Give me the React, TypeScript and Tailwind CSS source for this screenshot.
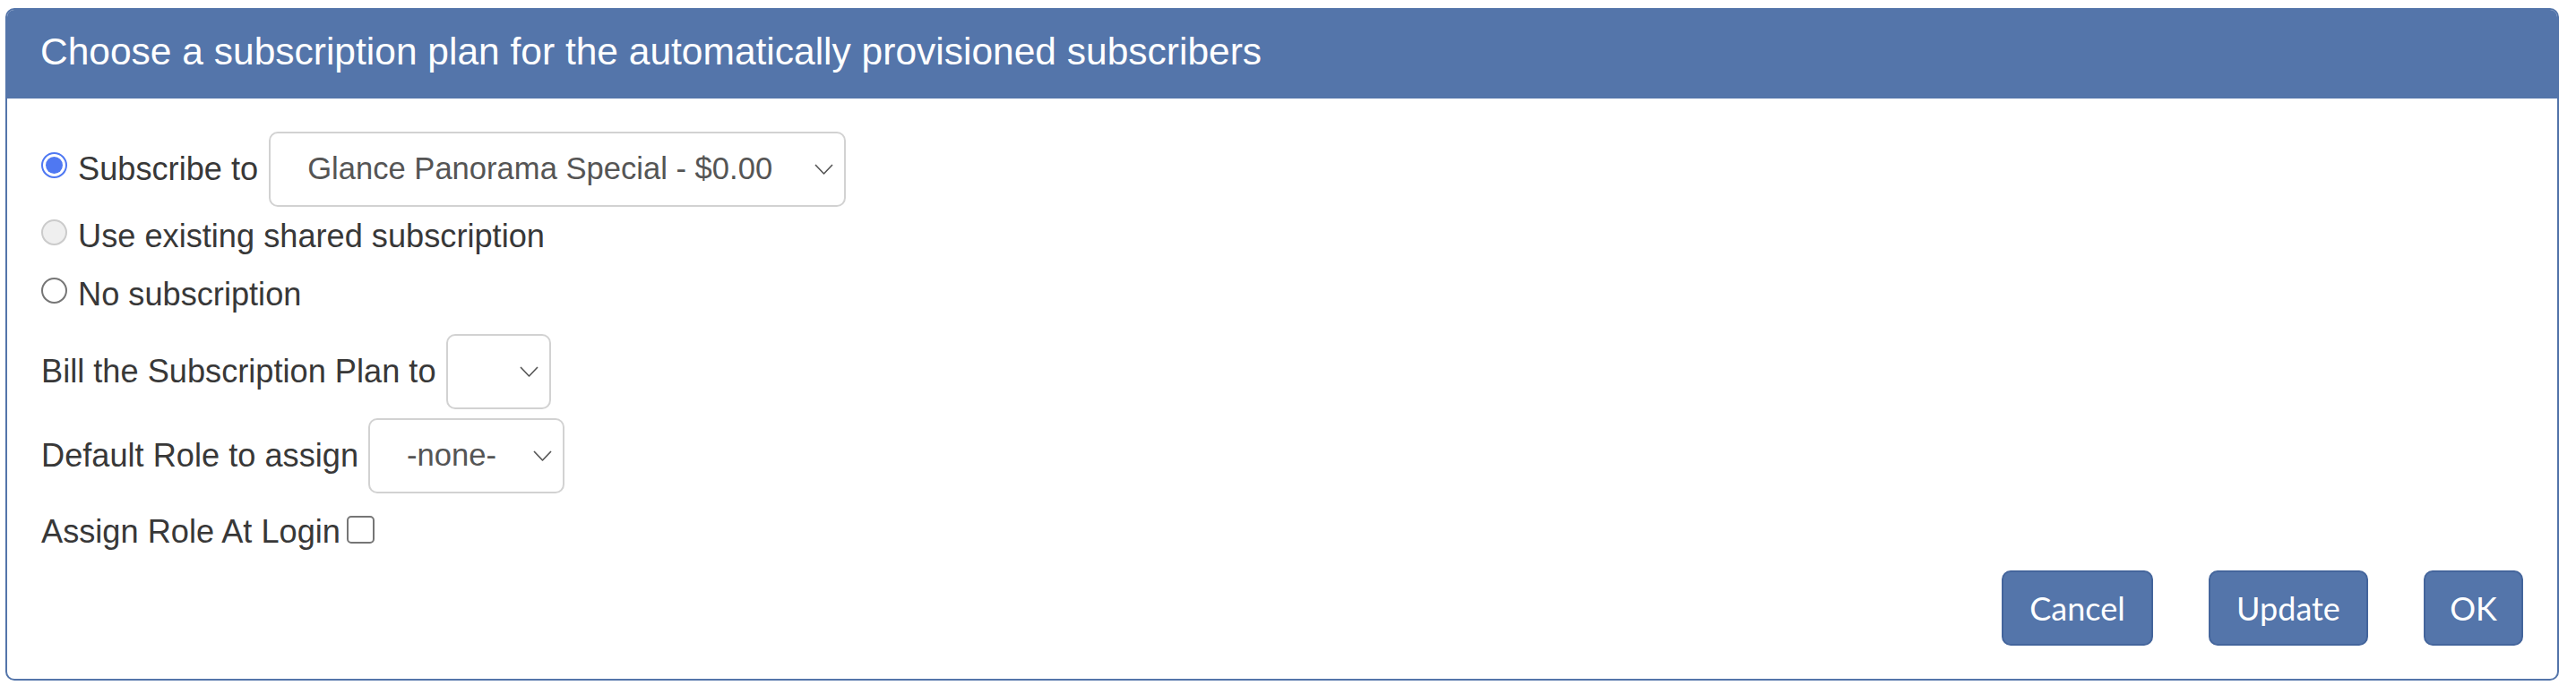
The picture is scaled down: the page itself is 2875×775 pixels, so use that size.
import clsx from 'clsx'

const BLUE = 'bg-[#5475aa]'

function Chevron() {
  return (
    <svg width="21" height="12" viewBox="0 0 21 12" fill="none" aria-hidden>
      <polyline points="1,1 10.5,11 20,1" stroke="#555" strokeWidth="1.6" strokeLinejoin="round" />
    </svg>
  )
}

function FakeSelect({ value, width }: { value?: string; width: string }) {
  return (
    <div
      className={clsx(
        'flex h-[84px] shrink-0 items-center justify-between rounded-[10px] border-2 border-[#d2d2d2] bg-white pl-[41px] pr-[12px] text-[34.6px] text-[#555]',
        width
      )}
    >
      <span className="whitespace-nowrap">{value ?? ''}</span>
      <Chevron />
    </div>
  )
}

function Radio({ state }: { state: 'checked' | 'disabled' | 'off' }) {
  if (state === 'checked') {
    return (
      <span className="mb-[10px] flex h-[29px] w-[29px] shrink-0 items-center justify-center rounded-full border-2 border-[#4f78f2] bg-white">
        <span className="h-[19px] w-[19px] rounded-full bg-[#4f78f2]" />
      </span>
    )
  }
  return (
    <span
      className={clsx(
        'mb-[10px] block h-[29px] w-[29px] shrink-0 rounded-full border-2',
        state === 'disabled' ? 'border-[#cbcbcb] bg-[#efefef]' : 'border-[#767676] bg-white'
      )}
    />
  )
}

export default function App() {
  return (
    <div className="h-[775px] w-[2875px] bg-white pt-[9px] pl-[6px] font-['Liberation_Sans',Arial,sans-serif] text-[36.2px] text-[#383838]">
      <div className="flex h-[751px] w-[2850px] flex-col overflow-hidden rounded-[10px] border-2 border-[#5475aa]">
        <div className={clsx('flex h-[99px] shrink-0 items-center pb-[6px] pl-[37px] text-[42.5px] text-white', BLUE)}>
          Choose a subscription plan for the automatically provisioned subscribers
        </div>

        <div className="flex flex-col pl-[38px] pr-[38px] pt-[37px]">
          <div className="flex h-[84px] items-center">
            <Radio state="checked" />
            <span className="ml-[12px] whitespace-nowrap">Subscribe to</span>
            <div className="ml-[12px]">
              <FakeSelect value="Glance Panorama Special - $0.00" width="w-[644px]" />
            </div>
          </div>

          <div className="flex h-[66px] items-center">
            <Radio state="disabled" />
            <span className="ml-[12px] whitespace-nowrap">Use existing shared subscription</span>
          </div>

          <div className="flex h-[65px] items-center">
            <Radio state="off" />
            <span className="ml-[12px] whitespace-nowrap">No subscription</span>
          </div>

          <div className="mt-[11px] flex h-[84px] items-center gap-[11px]">
            <span className="whitespace-nowrap">Bill the Subscription Plan to</span>
            <FakeSelect width="w-[117px]" />
          </div>

          <div className="mt-[10px] flex h-[84px] items-center gap-[11px]">
            <span className="whitespace-nowrap">Default Role to assign</span>
            <FakeSelect value="-none-" width="w-[219px]" />
          </div>

          <div className="mt-[18px] flex h-[50px] items-center gap-[7px]">
            <span className="whitespace-nowrap">Assign Role At Login</span>
            <span className="mb-[6px] block h-[31px] w-[31px] rounded-[5px] border-2 border-[#767676] bg-white" />
          </div>

          <div className="mt-[18px] flex justify-end gap-[62px] font-['Lato',sans-serif] text-[36px] text-white">
            <button type="button" className={clsx('h-[84px] w-[169px] rounded-[10px] border-2 border-[#44659c]', BLUE)}>
              Cancel
            </button>
            <button type="button" className={clsx('h-[84px] w-[178px] rounded-[10px] border-2 border-[#44659c]', BLUE)}>
              Update
            </button>
            <button type="button" className={clsx('h-[84px] w-[111px] rounded-[10px] border-2 border-[#44659c]', BLUE)}>
              OK
            </button>
          </div>
        </div>
      </div>
    </div>
  )
}
